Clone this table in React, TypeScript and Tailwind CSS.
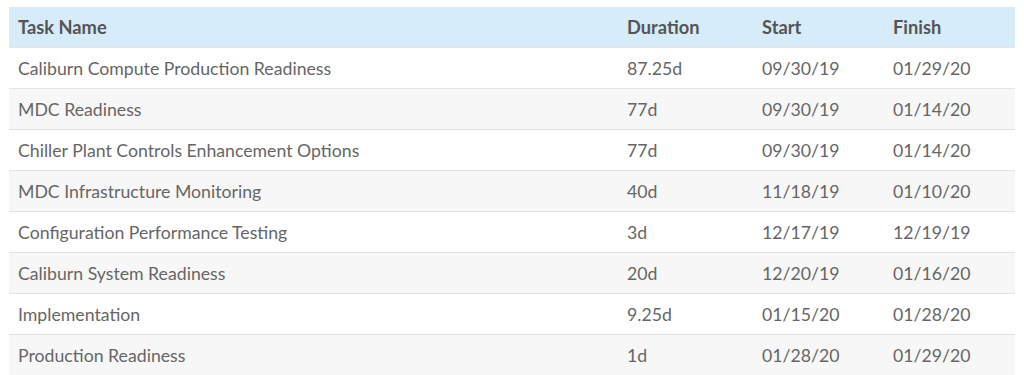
import { FC } from "react";

interface Task {
  name: string;
  duration: string;
  start: string;
  finish: string;
}

const TASKS: Task[] = [
  { name: "Caliburn Compute Production Readiness", duration: "87.25d", start: "09/30/19", finish: "01/29/20" },
  { name: "MDC Readiness", duration: "77d", start: "09/30/19", finish: "01/14/20" },
  { name: "Chiller Plant Controls Enhancement Options", duration: "77d", start: "09/30/19", finish: "01/14/20" },
  { name: "MDC Infrastructure Monitoring", duration: "40d", start: "11/18/19", finish: "01/10/20" },
  { name: "Configuration Performance Testing", duration: "3d", start: "12/17/19", finish: "12/19/19" },
  { name: "Caliburn System Readiness", duration: "20d", start: "12/20/19", finish: "01/16/20" },
  { name: "Implementation", duration: "9.25d", start: "01/15/20", finish: "01/28/20" },
  { name: "Production Readiness", duration: "1d", start: "01/28/20", finish: "01/29/20" },
];

const App: FC = () => {
  return (
    <div className="bg-white px-[9px] pt-[7px] font-['Lato','Liberation_Sans',sans-serif]">
      <table className="w-full border-collapse table-fixed">
        <colgroup>
          <col className="w-[609px]" />
          <col className="w-[135px]" />
          <col className="w-[131px]" />
          <col className="w-[131px]" />
        </colgroup>
        {/* HEADER */}
        <thead>
          <tr className="h-10 bg-[#d6ecf8] text-left text-[18.3px] text-[#555]">
            <th className="pl-[9px] pt-[2px] font-bold">Task Name</th>
            <th className="pl-[9px] pt-[2px] font-bold">Duration</th>
            <th className="pl-[9px] pt-[2px] font-bold">Start</th>
            <th className="pl-[9px] pt-[2px] font-bold">Finish</th>
          </tr>
        </thead>
        {/* ROWS */}
        <tbody className="text-[17.7px] text-[#666]">
          {TASKS.map((task, i) => (
            <tr
              key={task.name}
              className={`h-[41px] border-t border-[#e3e3e3] ${i % 2 === 1 ? "bg-[#f7f7f7]" : "bg-white"}`}
            >
              <td className="pl-[9px] pt-[3px]">{task.name}</td>
              <td className="pl-[9px] pt-[3px]">{task.duration}</td>
              <td className="pl-[9px] pt-[3px]">{task.start}</td>
              <td className="pl-[9px] pt-[3px]">{task.finish}</td>
            </tr>
          ))}
        </tbody>
      </table>
    </div>
  );
};

export default App;
